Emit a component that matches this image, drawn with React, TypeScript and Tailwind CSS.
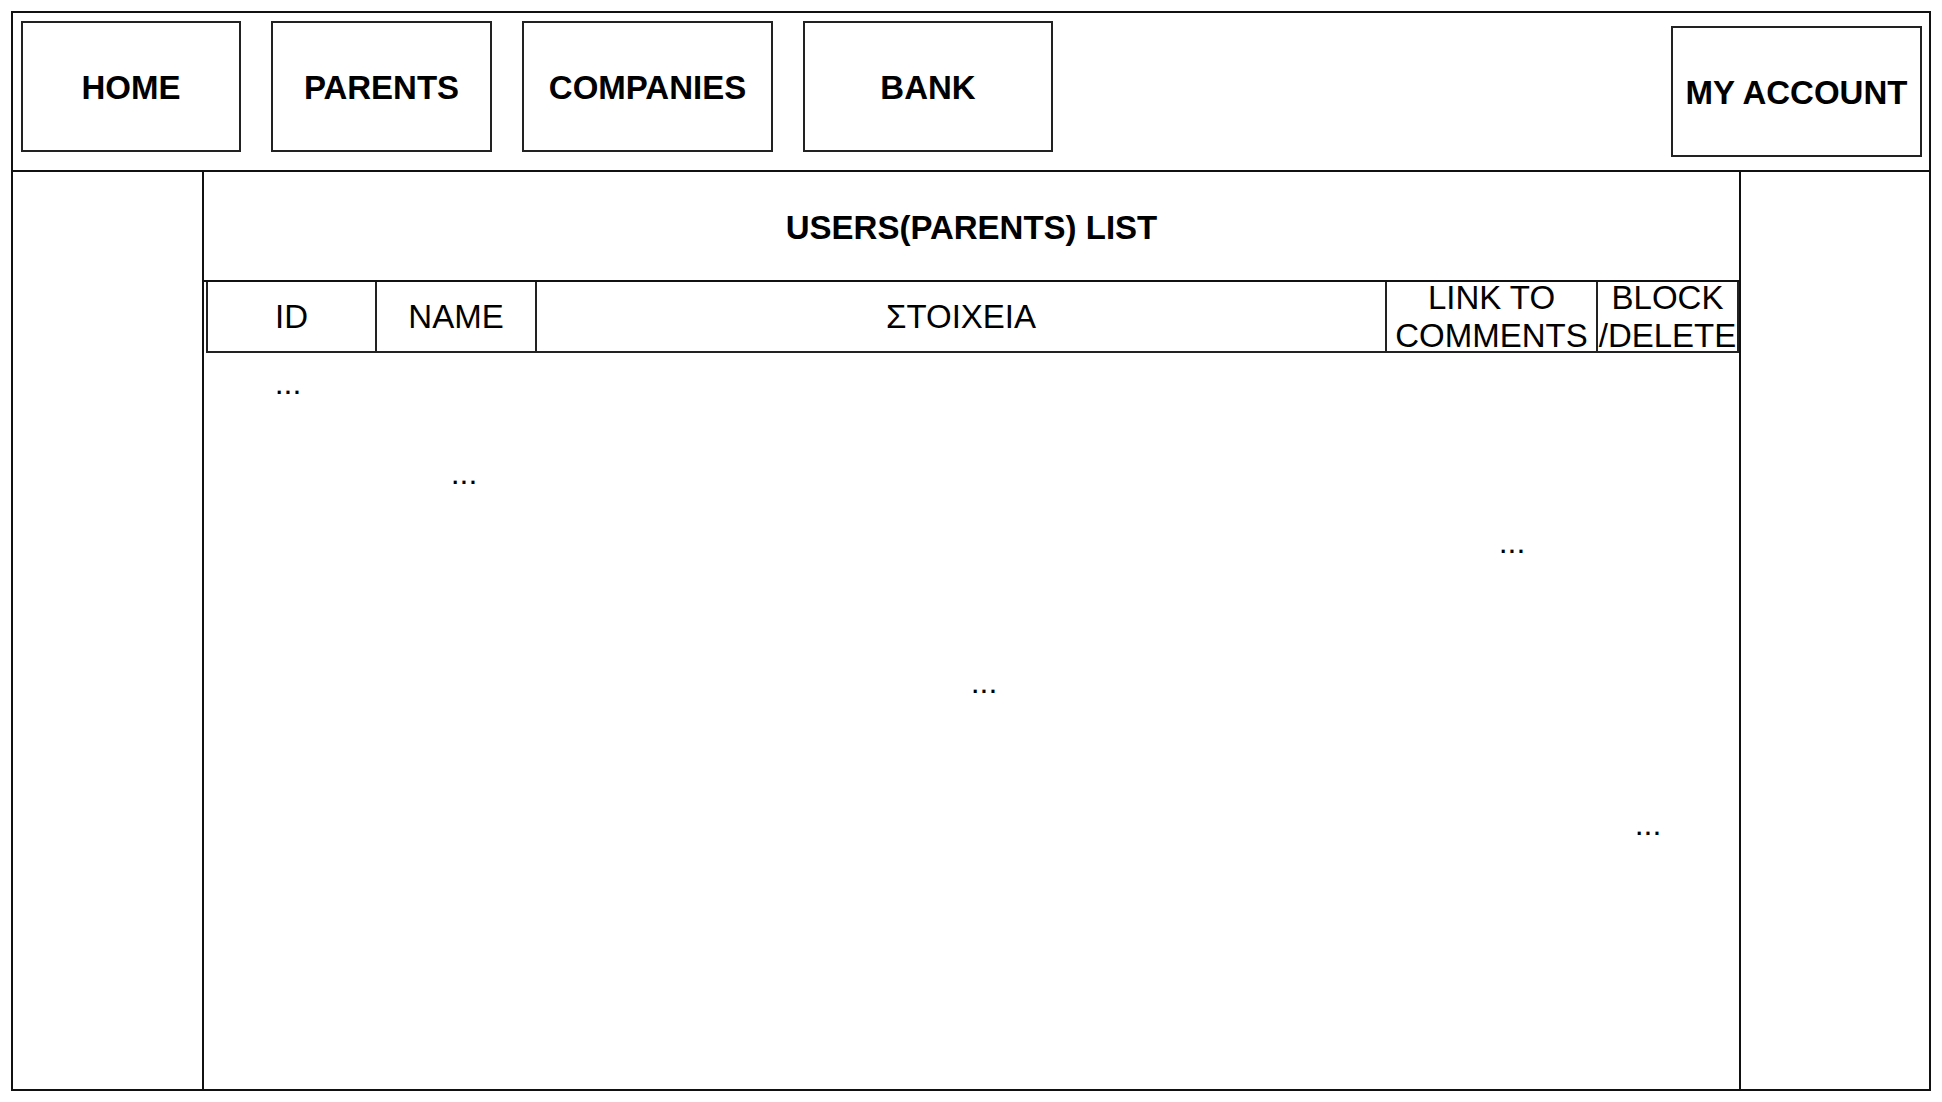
const navItems = [
  { label: "HOME", w: "w-[220px]" },
  { label: "PARENTS", w: "w-[221px]" },
  { label: "COMPANIES", w: "w-[251px]" },
  { label: "BANK", w: "w-[250px]" },
];

// scattered placeholder rows in the list body
const dots = [
  "ml-[64px] mt-[14px]",
  "ml-[240px] mt-[58px]",
  "ml-[1288px] mt-[37px]",
  "ml-[760px] mt-[108px]",
  "ml-[1424px] mt-[110px]",
];

export default function App() {
  return (
    <div className="min-h-[1102px] w-[1942px] bg-white p-[11px] font-['Liberation_Sans',Arial,sans-serif] text-black">
      <div className="flex h-[1080px] w-[1920px] flex-col border-2 border-[#111]">
        {/* top nav */}
        <div className="flex h-[159px] shrink-0 items-start border-b-2 border-[#111] pl-2 pr-[7px] pt-2">
          <div className="flex gap-[30px]">
            {navItems.map((n) => (
              <div
                key={n.label}
                className={`${n.w} flex h-[131px] items-center justify-center border-2 border-[#222] pt-[3px] text-[33px] font-bold`}
              >
                {n.label}
              </div>
            ))}
          </div>
          <div className="ml-auto mt-[5px] flex h-[131px] w-[251px] items-center justify-center border-2 border-[#222] pt-[3px] text-[33px] font-bold">
            MY ACCOUNT
          </div>
        </div>

        {/* main */}
        <div className="flex flex-1">
          <div className="w-[189px] shrink-0" />
          <div className="flex w-[1539px] shrink-0 flex-col border-x-2 border-[#111]">
            <div className="flex h-[110px] shrink-0 items-center justify-center border-b-2 border-[#111] pt-[3px] text-[33px] font-bold">
              USERS(PARENTS) LIST
            </div>
            <div className="ml-[2px] flex h-[71px] shrink-0 border-b-2 border-[#222] text-[33px] leading-[38px]">
              <div className="flex w-[171px] items-center justify-center border-x-2 border-[#222]">ID</div>
              <div className="flex w-[160px] items-center justify-center border-r-2 border-[#222]">NAME</div>
              <div className="flex w-[850px] items-center justify-center border-r-2 border-[#222]">ΣΤΟΙΧΕΙΑ</div>
              <div className="flex w-[211px] items-center justify-center border-r-2 border-[#222] text-center">
                LINK TO
                <br />
                COMMENTS
              </div>
              <div className="flex flex-1 items-center justify-center border-r-2 border-[#222] text-center">
                BLOCK
                <br />
                /DELETE
              </div>
            </div>
            <div className="flex flex-1 flex-col">
              {dots.map((d, i) => (
                <div key={i} className={`${d} w-[40px] text-center text-[32px] leading-[32px]`}>
                  ...
                </div>
              ))}
            </div>
          </div>
          <div className="flex-1" />
        </div>
      </div>
    </div>
  );
}
